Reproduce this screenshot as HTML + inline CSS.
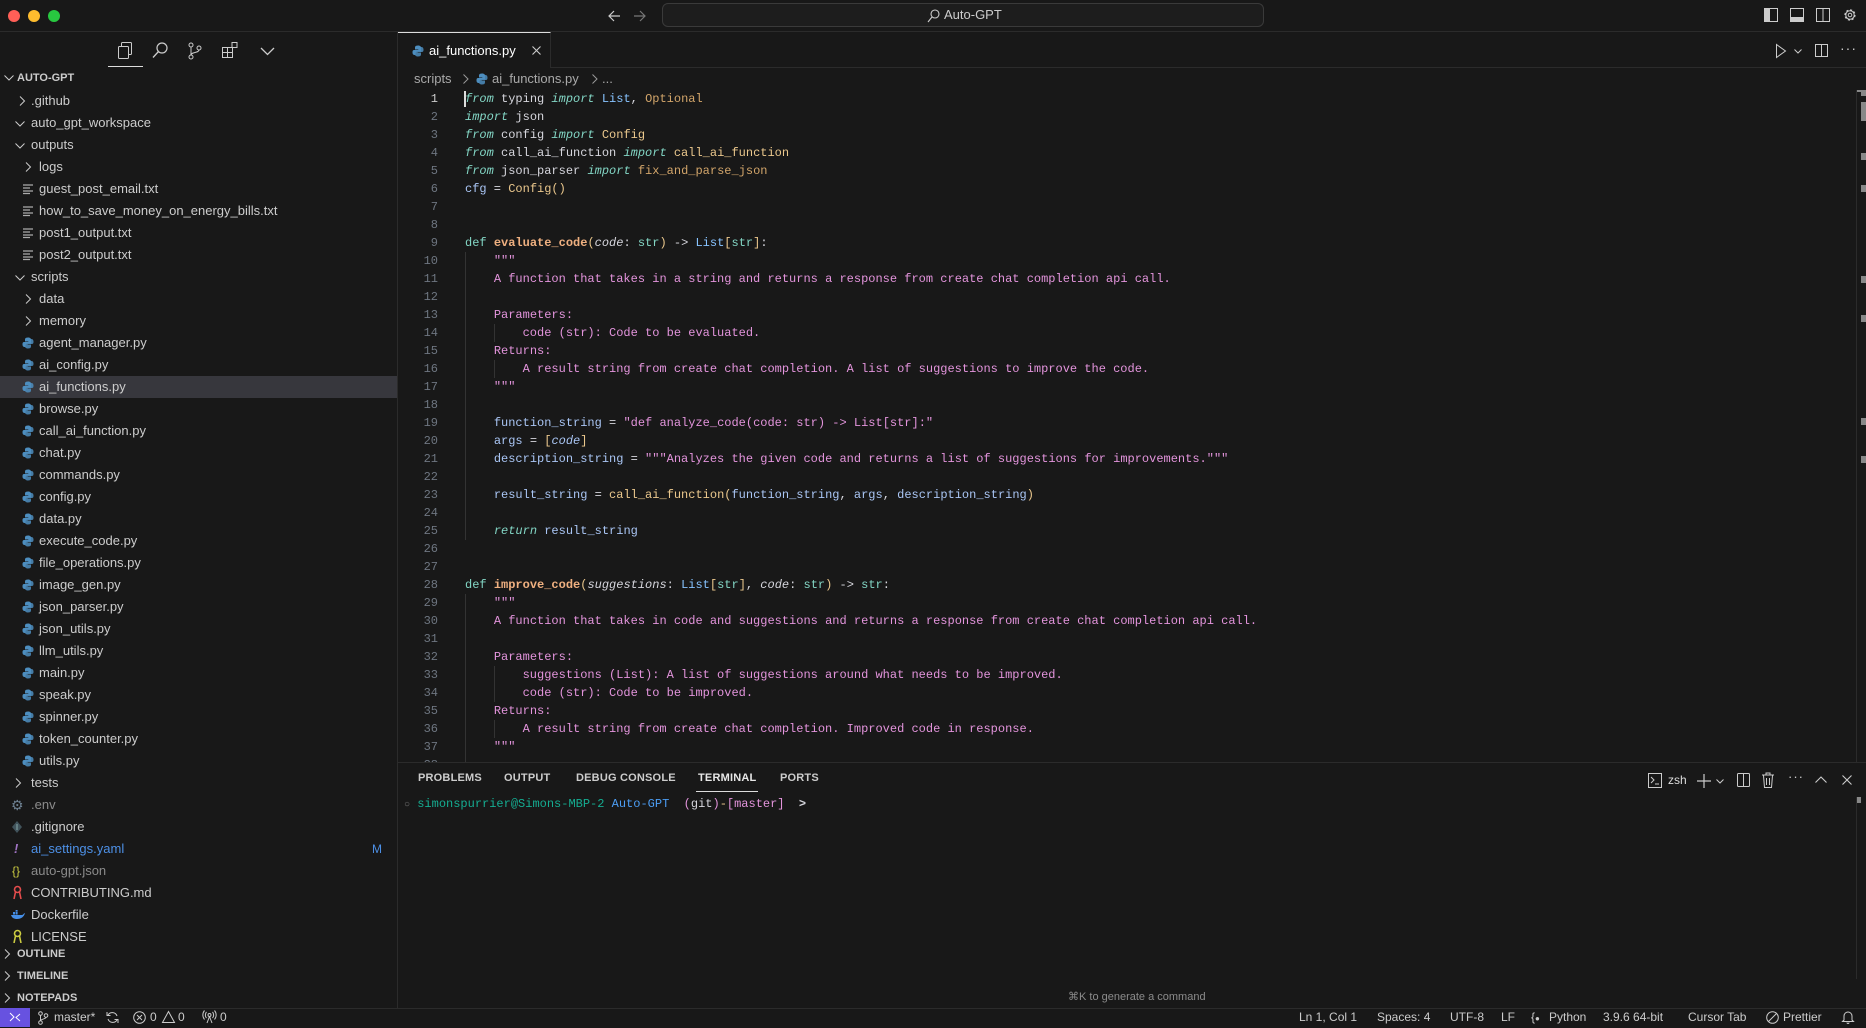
<!DOCTYPE html>
<html><head><meta charset="utf-8">
<style>
*{box-sizing:border-box;margin:0;padding:0}
body{width:1866px;height:1027px;background:#181818;overflow:hidden;position:relative;font-family:"Liberation Sans",sans-serif;color:#cccccc;font-size:13px}
.a{position:absolute}
.mono{font-family:"Liberation Mono",monospace;font-size:12px}
.row{position:absolute;left:0;width:397px;height:22px;line-height:22px;white-space:nowrap}
.chev{position:absolute;top:6px;width:10px;height:10px}
.py{position:absolute;top:5px;width:12px;height:12px}
.ln{position:absolute;height:18px;line-height:18px;white-space:pre}
.num{position:absolute;left:400px;width:38px;text-align:right;color:#6e7681;height:18px;line-height:18px}
.k{color:#83d6c5;font-style:italic}
.d{color:#83d6c5}
.f{color:#efb080;font-weight:bold}
.v{color:#aac6f5}
.s{color:#e394dc}
.y{color:#ebc88d}
.t{color:#87c3ff}
.o{color:#d2a56a}
.p{font-style:italic;color:#d6d6dd}
.w{color:#d6d6dd}
.g{position:absolute;width:1px;background:#333}
.ptab{position:absolute;top:772px;font-size:11px;font-weight:bold;color:#cccccc;letter-spacing:.2px}
.sb{position:absolute;top:1008px;height:19px;line-height:19px;font-size:12px;color:#cccccc;white-space:nowrap}
svg{position:absolute;overflow:visible}
</style></head><body>

<div class="a" style="left:0;top:0;width:1866px;height:32px;background:#181818;border-bottom:1px solid #2b2b2b"></div>
<div class="a" style="left:8px;top:10px;width:12px;height:12px;border-radius:50%;background:#ff5f57"></div>
<div class="a" style="left:28px;top:10px;width:12px;height:12px;border-radius:50%;background:#febc2e"></div>
<div class="a" style="left:48px;top:10px;width:12px;height:12px;border-radius:50%;background:#28c840"></div>
<svg style="left:607px;top:9px" width="14" height="14"><path d="M13 7H2M7 2L2 7l5 5" stroke="#ccc" stroke-width="1.2" fill="none"/></svg>
<svg style="left:633px;top:9px" width="14" height="14"><path d="M1 7h11M7 2l5 5-5 5" stroke="#777" stroke-width="1.2" fill="none"/></svg>
<div class="a" style="left:662px;top:3px;width:602px;height:24px;border:1px solid #3a3a3a;border-radius:6px;background:#1d1d1d"></div>
<svg style="left:927px;top:9px" width="13" height="14"><circle cx="8" cy="5" r="4" stroke="#ccc" fill="none" stroke-width="1.1"/><path d="M5 8L1 13" stroke="#ccc" stroke-width="1.1"/></svg>
<div class="a" style="left:944px;top:7px;font-size:13px;color:#ccc">Auto-GPT</div>
<svg style="left:1764px;top:8px" width="15" height="15"><rect x=".5" y=".5" width="13" height="13" fill="none" stroke="#ccc"/><rect x="1" y="1" width="5" height="12" fill="#ccc"/></svg>
<svg style="left:1790px;top:8px" width="15" height="15"><rect x=".5" y=".5" width="13" height="13" fill="none" stroke="#ccc"/><rect x="1" y="9" width="12" height="4" fill="#ccc"/></svg>
<svg style="left:1816px;top:8px" width="15" height="15"><rect x=".5" y=".5" width="13" height="13" fill="none" stroke="#ccc"/><path d="M7 1v12" stroke="#ccc"/></svg>
<svg style="left:1842px;top:7px" width="16" height="16"><circle cx="8" cy="8" r="5" fill="none" stroke="#ccc" stroke-width="1.2" stroke-dasharray="2.2 1.7"/><circle cx="8" cy="8" r="4.2" fill="none" stroke="#ccc"/><circle cx="8" cy="8" r="1.8" fill="none" stroke="#ccc"/></svg>

<div class="a" style="left:397px;top:32px;width:1px;height:976px;background:#2b2b2b"></div>
<svg style="left:117px;top:42px" width="16" height="18"><rect x="4.5" y=".5" width="10" height="12" rx="1" fill="none" stroke="#ccc"/><rect x="1.5" y="4.5" width="10" height="12" rx="1" fill="#181818" stroke="#ccc"/></svg>
<svg style="left:152px;top:42px" width="16" height="17"><circle cx="10" cy="6" r="5" fill="none" stroke="#ccc" stroke-width="1.2"/><path d="M6.5 9.5L1 15.5" stroke="#ccc" stroke-width="1.3"/></svg>
<svg style="left:188px;top:42px" width="14" height="18"><circle cx="3" cy="3" r="2" fill="none" stroke="#ccc"/><circle cx="3" cy="15" r="2" fill="none" stroke="#ccc"/><circle cx="11" cy="6" r="2" fill="none" stroke="#ccc"/><path d="M3 5v8M11 8c0 3-8 2-8 5" fill="none" stroke="#ccc"/></svg>
<svg style="left:222px;top:42px" width="17" height="17"><rect x=".5" y="5.5" width="5" height="5" fill="none" stroke="#ccc"/><rect x=".5" y="10.5" width="5" height="5" fill="none" stroke="#ccc"/><rect x="5.5" y="10.5" width="5" height="5" fill="none" stroke="#ccc"/><rect x="10" y=".5" width="5" height="5" fill="none" stroke="#ccc"/><path d="M5.5 5.5h5v5" fill="none" stroke="#ccc"/></svg>
<svg style="left:260px;top:47px" width="15" height="9"><path d="M1 1l6.5 6.5L14 1" fill="none" stroke="#ccc" stroke-width="1.3"/></svg>
<div class="a" style="left:108px;top:66px;width:35px;height:1px;background:#ddd"></div>

<div class="row" style="top:67px;font-size:11px;font-weight:bold">
<svg style="left:4px;top:8px" width="10" height="6"><path d="M.5.5l4.5 4.5L9.5.5" fill="none" stroke="#ccc"/></svg>
<span class="a" style="left:17px">AUTO-GPT</span></div>

<div id="tree"></div>

<div class="row" style="top:376px;background:#37373d"></div>

<script>
const R='<svg class="chev" width="7" height="10" style="left:XXpx"><path d="M1 .5l4.5 4.5L1 9.5" fill="none" stroke="#ccc"/></svg>';
const D='<svg class="chev" width="10" height="7" style="left:XXpx;top:9px"><path d="M.5 .5l4.5 4.5L9.5.5" fill="none" stroke="#ccc"/></svg>';
const PY='<svg class="py" style="left:XXpx" width="12" height="12"><path d="M6 .5C3 .5 3 2 3 3v1.5h3.3V5H2C.6 5 .5 6.5.5 7.5S1 10 2.5 10H3.5V8.3C3.5 7 4.5 6.5 5.5 6.5h3C9.5 6.5 9 5.5 9 5V2.5C9 1.5 8 .5 6 .5z" fill="#4d8ebf"/><path d="M6 11.5c3 0 3-1.5 3-2.5V7.5H5.7V7H10c1.4 0 1.5-1.5 1.5-2.5S11 2 9.5 2H8.5v1.7C8.5 5 7.5 5.5 6.5 5.5h-3C2.5 5.5 3 6.5 3 7v2.5c0 1 1 2 3 2z" fill="#4d8ebf" opacity=".85"/></svg>';
const TX='<svg class="py" style="left:XXpx;top:6px" width="11" height="10"><path d="M0 1h10M0 4h7M0 7h10M0 9.5h7" stroke="#aaa" stroke-width="1.2"/></svg>';
const items=[
['r',19,31,'.github'],['d',15,31,'auto_gpt_workspace'],['d',15,31,'outputs'],['r',25,39,'logs'],
['t',23,39,'guest_post_email.txt'],['t',23,39,'how_to_save_money_on_energy_bills.txt'],['t',23,39,'post1_output.txt'],['t',23,39,'post2_output.txt'],
['d',15,31,'scripts'],['r',25,39,'data'],['r',25,39,'memory']];
['agent_manager','ai_config','ai_functions','browse','call_ai_function','chat','commands','config','data','execute_code','file_operations','image_gen','json_parser','json_utils','llm_utils','main','speak','spinner','token_counter','utils'].forEach(n=>items.push(['p',22,39,n+'.py']));
items.push(['r',15,31,'tests']);
let h='';
items.forEach((it,i)=>{
 const top=90+22*i;
 let ic=it[0]=='r'?R:it[0]=='d'?D:it[0]=='p'?PY:TX;
 ic=ic.replace('XX',it[1]);
 h+=`<div class="row" style="top:${top}px;z-index:1">${ic}<span class="a" style="left:${it[2]}px">${it[3]}</span></div>`;
});
document.getElementById('tree').innerHTML=h;
</script>

<div class="row" style="top:794px"><span class="a" style="left:11px;color:#6d8091;font-size:14px">⚙</span><span class="a" style="left:31px;color:#8b8b8b">.env</span></div>
<div class="row" style="top:816px"><svg class="py" style="left:12px" width="10" height="12"><path d="M5 0L10 6 5 12 0 6z" fill="#41535b"/><path d="M5 3v6" stroke="#8aa" /></svg><span class="a" style="left:31px">.gitignore</span></div>
<div class="row" style="top:838px"><span class="a" style="left:14px;color:#a074c4;font-weight:bold;font-style:italic">!</span><span class="a" style="left:31px;color:#4d90e6">ai_settings.yaml</span><span class="a" style="left:372px;color:#4d90e6;font-size:12px">M</span></div>
<div class="row" style="top:860px"><span class="a" style="left:12px;color:#cbcb41;font-size:12px">{}</span><span class="a" style="left:31px;color:#8b8b8b">auto-gpt.json</span></div>
<div class="row" style="top:882px"><svg class="py" style="left:13px;top:4px" width="9" height="14"><circle cx="4.5" cy="3.5" r="3" fill="none" stroke="#e34c4c" stroke-width="1.6"/><path d="M2.5 6L1 13M6.5 6L8 13" stroke="#e34c4c" stroke-width="1.6"/></svg><span class="a" style="left:31px">CONTRIBUTING.md</span></div>
<div class="row" style="top:904px"><svg class="py" style="left:11px;top:6px" width="14" height="10"><path d="M0 5h11c1 0 2-2 3-2-1 4-4 6-8 6C3 9 1 8 0 5z" fill="#458ee6"/><rect x="2" y="2" width="2" height="2.5" fill="#458ee6"/><rect x="4.6" y="2" width="2" height="2.5" fill="#458ee6"/><rect x="4.6" y="0" width="2" height="1.7" fill="#458ee6"/></svg><span class="a" style="left:31px">Dockerfile</span></div>
<div class="row" style="top:926px"><svg class="py" style="left:13px;top:4px" width="9" height="14"><circle cx="4.5" cy="3.5" r="3" fill="none" stroke="#cbcb41" stroke-width="1.6"/><path d="M2.5 6L1 13M6.5 6L8 13" stroke="#cbcb41" stroke-width="1.6"/></svg><span class="a" style="left:31px">LICENSE</span></div>
<div class="row" style="top:943px;font-size:11px;font-weight:bold;background:#181818"><svg class="chev" style="left:4px" width="7" height="10"><path d="M1 .5l4.5 4.5L1 9.5" fill="none" stroke="#ccc"/></svg><span class="a" style="left:17px">OUTLINE</span></div>
<div class="row" style="top:965px;font-size:11px;font-weight:bold"><svg class="chev" style="left:4px" width="7" height="10"><path d="M1 .5l4.5 4.5L1 9.5" fill="none" stroke="#ccc"/></svg><span class="a" style="left:17px">TIMELINE</span></div>
<div class="row" style="top:987px;font-size:11px;font-weight:bold"><svg class="chev" style="left:4px" width="7" height="10"><path d="M1 .5l4.5 4.5L1 9.5" fill="none" stroke="#ccc"/></svg><span class="a" style="left:17px">NOTEPADS</span></div>

<div class="a" style="left:398px;top:67px;width:1468px;height:1px;background:#2b2b2b"></div>
<div class="a" style="left:398px;top:32px;width:153px;height:36px;background:#181818;border-right:1px solid #2b2b2b;border-top:1px solid #ddd"></div>
<svg style="left:412px;top:45px" width="12" height="12"><path d="M6 .5C3 .5 3 2 3 3v1.5h3.3V5H2C.6 5 .5 6.5.5 7.5S1 10 2.5 10H3.5V8.3C3.5 7 4.5 6.5 5.5 6.5h3C9.5 6.5 9 5.5 9 5V2.5C9 1.5 8 .5 6 .5z" fill="#4d8ebf"/><path d="M6 11.5c3 0 3-1.5 3-2.5V7.5H5.7V7H10c1.4 0 1.5-1.5 1.5-2.5S11 2 9.5 2H8.5v1.7C8.5 5 7.5 5.5 6.5 5.5h-3C2.5 5.5 3 6.5 3 7v2.5c0 1 1 2 3 2z" fill="#4d8ebf" opacity=".85"/></svg>
<div class="a" style="left:429px;top:43px;color:#fff">ai_functions.py</div>
<svg style="left:532px;top:46px" width="9" height="9"><path d="M.5.5l8 8M8.5.5l-8 8" stroke="#ccc" stroke-width="1.1"/></svg>
<svg style="left:1776px;top:44px" width="10" height="14"><path d="M.5.5v13l9-6.5z" fill="none" stroke="#ccc"/></svg>
<svg style="left:1794px;top:49px" width="8" height="5"><path d="M.5.5L4 4 7.5.5" fill="none" stroke="#ccc"/></svg>
<svg style="left:1815px;top:44px" width="14" height="14"><rect x=".5" y=".5" width="12" height="12" fill="none" stroke="#ccc"/><path d="M6.5 1v12" stroke="#ccc"/></svg>
<div class="a" style="left:1840px;top:40px;color:#ccc;font-size:14px;letter-spacing:1px">···</div>

<div class="a" style="left:414px;top:71px;color:#a9a9a9;font-size:13px">scripts</div>
<svg style="left:463px;top:74px" width="6" height="10"><path d="M.5.5L5 5 .5 9.5" fill="none" stroke="#999"/></svg>
<svg style="left:476px;top:73px" width="12" height="12"><path d="M6 .5C3 .5 3 2 3 3v1.5h3.3V5H2C.6 5 .5 6.5.5 7.5S1 10 2.5 10H3.5V8.3C3.5 7 4.5 6.5 5.5 6.5h3C9.5 6.5 9 5.5 9 5V2.5C9 1.5 8 .5 6 .5z" fill="#4d8ebf"/><path d="M6 11.5c3 0 3-1.5 3-2.5V7.5H5.7V7H10c1.4 0 1.5-1.5 1.5-2.5S11 2 9.5 2H8.5v1.7C8.5 5 7.5 5.5 6.5 5.5h-3C2.5 5.5 3 6.5 3 7v2.5c0 1 1 2 3 2z" fill="#4d8ebf" opacity=".85"/></svg>
<div class="a" style="left:492px;top:71px;color:#a9a9a9;font-size:13px">ai_functions.py</div>
<svg style="left:592px;top:74px" width="6" height="10"><path d="M.5.5L5 5 .5 9.5" fill="none" stroke="#999"/></svg>
<div class="a" style="left:602px;top:71px;color:#a9a9a9">...</div>

<div class="a" style="left:398px;top:90px;width:1468px;height:672px;overflow:hidden">
<div class="a mono" id="code" style="left:0;top:0;width:1468px;height:700px"></div>
</div>
<script>
const L=[
'<span class="k">from</span><span class="w"> typing </span><span class="k">import</span> <span class="t">List</span><span class="w">, </span><span class="o">Optional</span>',
'<span class="k">import</span><span class="w"> json</span>',
'<span class="k">from</span><span class="w"> config </span><span class="k">import</span> <span class="y">Config</span>',
'<span class="k">from</span><span class="w"> call_ai_function </span><span class="k">import</span> <span class="y">call_ai_function</span>',
'<span class="k">from</span><span class="w"> json_parser </span><span class="k">import</span> <span class="o">fix_and_parse_json</span>',
'<span class="v">cfg</span><span class="w"> = </span><span class="y">Config()</span>',
'','',
'<span class="d">def</span> <span class="f">evaluate_code</span><span class="y">(</span><span class="p">code</span><span class="w">: </span><span class="d">str</span><span class="y">)</span><span class="w"> -&gt; </span><span class="t">List</span><span class="y">[</span><span class="d">str</span><span class="y">]</span><span class="w">:</span>',
'    <span class="s">"""</span>',
'    <span class="s">A function that takes in a string and returns a response from create chat completion api call.</span>',
'',
'    <span class="s">Parameters:</span>',
'        <span class="s">code (str): Code to be evaluated.</span>',
'    <span class="s">Returns:</span>',
'        <span class="s">A result string from create chat completion. A list of suggestions to improve the code.</span>',
'    <span class="s">"""</span>',
'',
'    <span class="v">function_string</span><span class="w"> = </span><span class="s">"def analyze_code(code: str) -&gt; List[str]:"</span>',
'    <span class="v">args</span><span class="w"> = </span><span class="y">[</span><span class="p" style="color:#aac6f5">code</span><span class="y">]</span>',
'    <span class="v">description_string</span><span class="w"> = </span><span class="s">"""Analyzes the given code and returns a list of suggestions for improvements."""</span>',
'',
'    <span class="v">result_string</span><span class="w"> = </span><span class="y">call_ai_function(</span><span class="v">function_string</span><span class="w">, </span><span class="v">args</span><span class="w">, </span><span class="v">description_string</span><span class="y">)</span>',
'',
'    <span class="k">return</span> <span class="v">result_string</span>',
'','',
'<span class="d">def</span> <span class="f">improve_code</span><span class="y">(</span><span class="p">suggestions</span><span class="w">: </span><span class="t">List</span><span class="y">[</span><span class="d">str</span><span class="y">]</span><span class="w">, </span><span class="p">code</span><span class="w">: </span><span class="d">str</span><span class="y">)</span><span class="w"> -&gt; </span><span class="d">str</span><span class="w">:</span>',
'    <span class="s">"""</span>',
'    <span class="s">A function that takes in code and suggestions and returns a response from create chat completion api call.</span>',
'',
'    <span class="s">Parameters:</span>',
'        <span class="s">suggestions (List): A list of suggestions around what needs to be improved.</span>',
'        <span class="s">code (str): Code to be improved.</span>',
'    <span class="s">Returns:</span>',
'        <span class="s">A result string from create chat completion. Improved code in response.</span>',
'    <span class="s">"""</span>',
'','',''];
let c='';
L.forEach((l,i)=>{
 const t=i*18;
 c+=`<div class="num" style="left:2px;top:${t}px;${i==0?'color:#ccc':''}">${i+1}</div>`;
 c+=`<div class="ln" style="left:67px;top:${t}px">${l}</div>`;
});
c+='<div class="g" style="left:67px;top:162px;height:288px"></div>';
c+='<div class="g" style="left:96px;top:234px;height:18px"></div>';
c+='<div class="g" style="left:96px;top:270px;height:18px"></div>';
c+='<div class="g" style="left:67px;top:504px;height:200px"></div>';
c+='<div class="g" style="left:96px;top:576px;height:36px"></div>';
c+='<div class="g" style="left:96px;top:630px;height:18px"></div>';
c+='<div class="a" style="left:66px;top:1px;width:2px;height:16px;background:#ddd"></div>';
document.getElementById('code').innerHTML=c;
</script>

<div class="a" style="left:1856px;top:90px;width:1px;height:672px;background:#2b2b2b"></div>
<div class="a" style="left:1857px;top:90px;width:9px;height:2px;background:#888"></div>
<div class="a" style="left:1861px;top:92px;width:5px;height:4px;background:#888"></div>
<div class="a" style="left:1861px;top:102px;width:5px;height:19px;background:#888"></div>
<div class="a" style="left:1861px;top:153px;width:5px;height:7px;background:#888"></div>
<div class="a" style="left:1861px;top:185px;width:5px;height:7px;background:#888"></div>
<div class="a" style="left:1861px;top:276px;width:5px;height:7px;background:#888"></div>
<div class="a" style="left:1861px;top:315px;width:5px;height:7px;background:#888"></div>
<div class="a" style="left:1861px;top:418px;width:5px;height:7px;background:#888"></div>
<div class="a" style="left:1861px;top:456px;width:5px;height:7px;background:#888"></div>

<div class="a" style="left:398px;top:762px;width:1468px;height:246px;background:#181818;border-top:1px solid #2b2b2b"></div>
<div class="ptab" style="left:418px">PROBLEMS</div>
<div class="ptab" style="left:504px">OUTPUT</div>
<div class="ptab" style="left:576px">DEBUG CONSOLE</div>
<div class="ptab" style="left:698px;color:#e7e7e7">TERMINAL</div>
<div class="a" style="left:696px;top:791px;width:62px;height:1px;background:#ddd"></div>
<div class="ptab" style="left:780px">PORTS</div>
<svg style="left:1648px;top:773px" width="14" height="15"><rect x=".5" y=".5" width="13" height="14" fill="none" stroke="#ccc"/><path d="M3 4l3 3-3 3M7 11h4" fill="none" stroke="#ccc"/></svg>
<div class="a" style="left:1668px;top:773px;font-size:12px;color:#ddd">zsh</div>
<svg style="left:1697px;top:774px" width="14" height="14"><path d="M7 0v14M0 7h14" stroke="#ccc" stroke-width="1.2"/></svg>
<svg style="left:1716px;top:779px" width="8" height="5"><path d="M.5.5L4 4 7.5.5" fill="none" stroke="#ccc"/></svg>
<svg style="left:1737px;top:773px" width="14" height="15"><rect x=".5" y=".5" width="12" height="13" rx="1" fill="none" stroke="#ccc"/><path d="M6.5 1v13" stroke="#ccc"/></svg>
<svg style="left:1762px;top:772px" width="12" height="16"><path d="M0 3h12M4 3V1h4v2M1.5 3.5l1 12h7l1-12M4.5 6v7M7.5 6v7" fill="none" stroke="#ccc"/></svg>
<div class="a" style="left:1788px;top:769px;color:#ccc;font-size:13px;letter-spacing:1px">···</div>
<svg style="left:1815px;top:776px" width="12" height="7"><path d="M.5 6.5L6 1l5.5 5.5" fill="none" stroke="#ccc" stroke-width="1.1"/></svg>
<svg style="left:1842px;top:775px" width="10" height="10"><path d="M.5.5l9 9M9.5.5l-9 9" stroke="#ccc" stroke-width="1.1"/></svg>
<div class="a" style="left:1856px;top:797px;width:1px;height:182px;background:#2b2b2b"></div>
<div class="a" style="left:1857px;top:797px;width:4px;height:6px;background:#888"></div>

<div class="a mono" style="left:404px;top:796px;white-space:pre;line-height:16px"><span style="color:#777;font-size:10px">○</span> <span style="color:#15ac91">simonspurrier@Simons-MBP-2</span> <span style="color:#4c9df3">Auto-GPT</span>  <span style="color:#e394dc">(</span><span class="w">git</span><span style="color:#e394dc">)</span><span style="color:#ebc88d">-</span><span style="color:#e394dc">[master]</span>  <span class="w" style="font-weight:bold">&gt;</span></div>
<div class="a" style="left:1068px;top:990px;font-size:11px;color:#8b8b8b">⌘K to generate a command</div>
<div class="a" style="left:397px;top:979px;width:1px;height:29px;background:#2b2b2b"></div>

<div class="a" style="left:0;top:1008px;width:1866px;height:19px;background:#181818;border-top:1px solid #2b2b2b"></div>
<div class="a" style="left:0;top:1008px;width:30px;height:19px;background:#6752e0"></div>
<svg style="left:9px;top:1012px" width="12" height="11"><path d="M1 1l4 4-4 4M11 2L7 5.5 11 9" fill="none" stroke="#fff" stroke-width="1"/></svg>
<svg style="left:38px;top:1011px" width="10" height="14"><circle cx="2.5" cy="2.5" r="1.8" fill="none" stroke="#ccc"/><circle cx="2.5" cy="11.5" r="1.8" fill="none" stroke="#ccc"/><circle cx="8" cy="4.5" r="1.8" fill="none" stroke="#ccc"/><path d="M2.5 4.3v5.4M8 6.3c0 2-5.5 1.5-5.5 3.5" fill="none" stroke="#ccc"/></svg>
<div class="sb" style="left:54px">master*</div>
<svg style="left:106px;top:1011px" width="13" height="13"><path d="M11 5A5 5 0 0 0 2 4M2 8a5 5 0 0 0 9 1" fill="none" stroke="#ccc"/><path d="M1 1v3.5h3.5M12 12V8.5H8.5" fill="none" stroke="#ccc"/></svg>
<svg style="left:133px;top:1011px" width="13" height="13"><circle cx="6.5" cy="6.5" r="5.8" fill="none" stroke="#ccc"/><path d="M4 4l5 5M9 4l-5 5" stroke="#ccc"/></svg>
<div class="sb" style="left:150px">0</div>
<svg style="left:162px;top:1011px" width="13" height="12"><path d="M6.5.5L12.5 11.5H.5z" fill="none" stroke="#ccc"/></svg>
<div class="sb" style="left:178px">0</div>
<svg style="left:203px;top:1010px" width="13" height="14"><circle cx="6.5" cy="5" r="1.5" fill="none" stroke="#ccc"/><path d="M6.5 6.5L4 13M6.5 6.5L9 13M3.5 2a4.5 4.5 0 0 0 0 6M9.5 2a4.5 4.5 0 0 1 0 6M1.5 .5a7 7 0 0 0 0 9M11.5.5a7 7 0 0 1 0 9" fill="none" stroke="#ccc"/></svg>
<div class="sb" style="left:220px">0</div>

<div class="sb" style="left:1299px">Ln 1, Col 1</div>
<div class="sb" style="left:1377px">Spaces: 4</div>
<div class="sb" style="left:1450px">UTF-8</div>
<div class="sb" style="left:1501px">LF</div>
<div class="sb" style="left:1531px">{<span style="font-size:8px">●</span></div>
<div class="sb" style="left:1549px">Python</div>
<div class="sb" style="left:1603px">3.9.6 64-bit</div>
<div class="sb" style="left:1688px">Cursor Tab</div>
<svg style="left:1766px;top:1011px" width="13" height="13"><circle cx="6.5" cy="6.5" r="5.8" fill="none" stroke="#ccc"/><path d="M2.5 10.5l8-8" stroke="#ccc"/></svg>
<div class="sb" style="left:1783px">Prettier</div>
<svg style="left:1842px;top:1010px" width="12" height="14"><path d="M2 10V6a4 4 0 0 1 8 0v4l1.5 1.5h-11zM5 12.5a1 1 0 0 0 2 0" fill="none" stroke="#ccc"/></svg>
</body></html>
